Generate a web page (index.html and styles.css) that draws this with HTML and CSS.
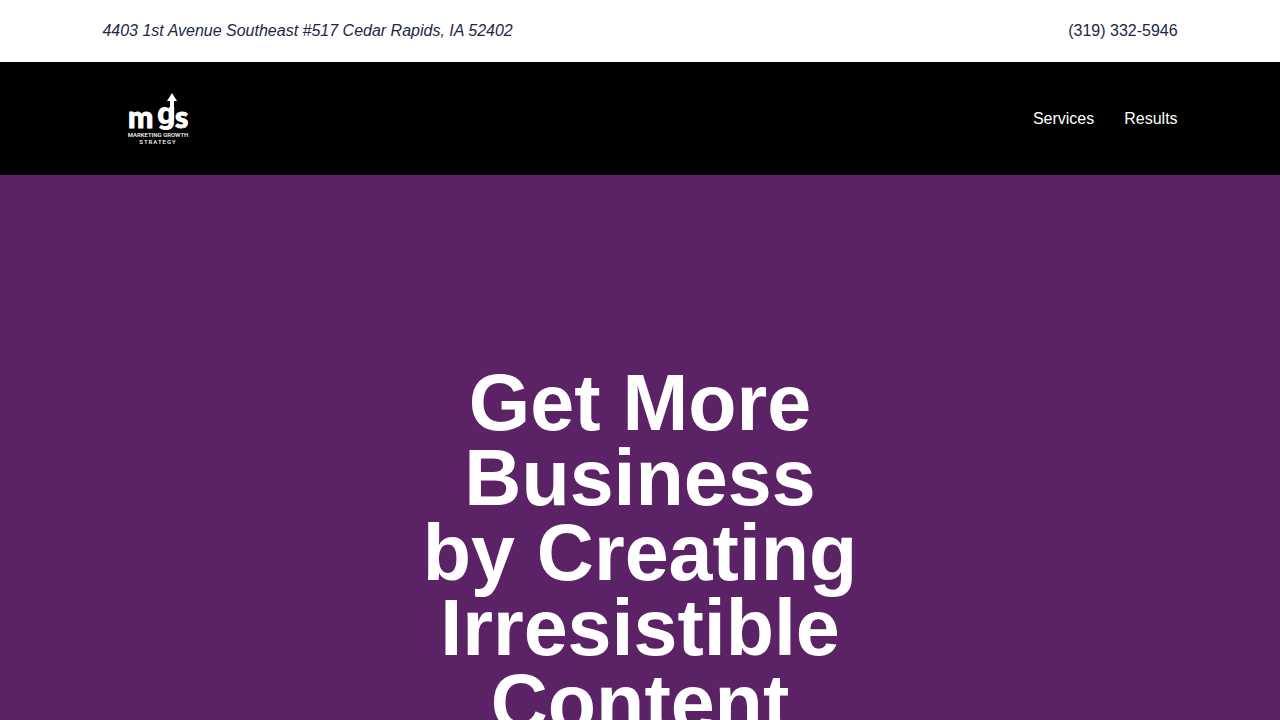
FILE: index.html
```html
<!DOCTYPE html>
<html lang="en">
<head>
<meta charset="utf-8">
<meta name="viewport" content="width=device-width, initial-scale=1">
<title>Marketing Growth Strategy</title>
<link rel="stylesheet" href="styles.css">
</head>
<body>
<div class="topbar">
  <div class="container bar-row">
    <address class="address">4403 1st Avenue Southeast #517 Cedar Rapids, IA 52402</address>
    <a class="phone" href="tel:+13193325946">(319) 332-5946</a>
  </div>
</div>
<header class="header">
  <div class="container bar-row">
    <a class="brand" href="#" aria-label="Marketing Growth Strategy">
      <svg class="logo" viewBox="0 0 112 65" fill="#fff">
        <text class="logo-mark" x="26" y="42">m</text>
        <text class="logo-mark logo-g" x="55" y="38">g</text>
        <text class="logo-mark" x="73" y="42">s</text>
        <path d="M70 7 75 15H72V34H68V15H65Z"/>
        <text class="logo-line" x="56" y="51">MARKETING GROWTH</text>
        <text class="logo-line logo-wide" x="56" y="58">STRATEGY</text>
      </svg>
    </a>
    <nav class="nav">
      <a class="nav-link" href="#services">Services</a>
      <a class="nav-link" href="#results">Results</a>
    </nav>
  </div>
</header>
<main class="hero">
  <h1 class="hero-title">Get More Business<br>by Creating Irresistible Content</h1>
</main>
</body>
</html>
```

FILE: styles.css
```css
* {
  box-sizing: border-box;
}

body {
  margin: 0;
  font-family: "Liberation Sans", Arial, sans-serif;
  font-size: 16px;
  line-height: 22px;
  background: #5b2266;
}

a {
  color: inherit;
  text-decoration: none;
}

.container {
  padding: 0 8%;
}

.bar-row {
  display: flex;
  align-items: center;
  justify-content: space-between;
}

.topbar {
  padding: 20px 0;
  background: #fff;
  color: #1c2746;
}

.header {
  padding: 24px 0;
  background: #000;
  color: #fff;
}

.logo {
  display: block;
  width: 112px;
  height: 65px;
}

.logo-mark {
  font-family: Lato, sans-serif;
  font-size: 30px;
  font-weight: 900;
  stroke: #fff;
  stroke-width: 1px;
}

.logo-g {
  font-family: Roboto, sans-serif;
  stroke: none;
  font-size: 32px;
}

.logo-line {
  font-family: Roboto, sans-serif;
  font-size: 6px;
  font-weight: 500;
  text-anchor: middle;
}

.logo-wide {
  letter-spacing: 1px;
}

.nav {
  display: flex;
  gap: 30px;
}

.hero {
  padding: 190px 20px;
  color: #fff;
  text-align: center;
}

.hero-title {
  max-width: 460px;
  margin: 0 auto;
  font-size: 79px;
  line-height: 75px;
}
```
